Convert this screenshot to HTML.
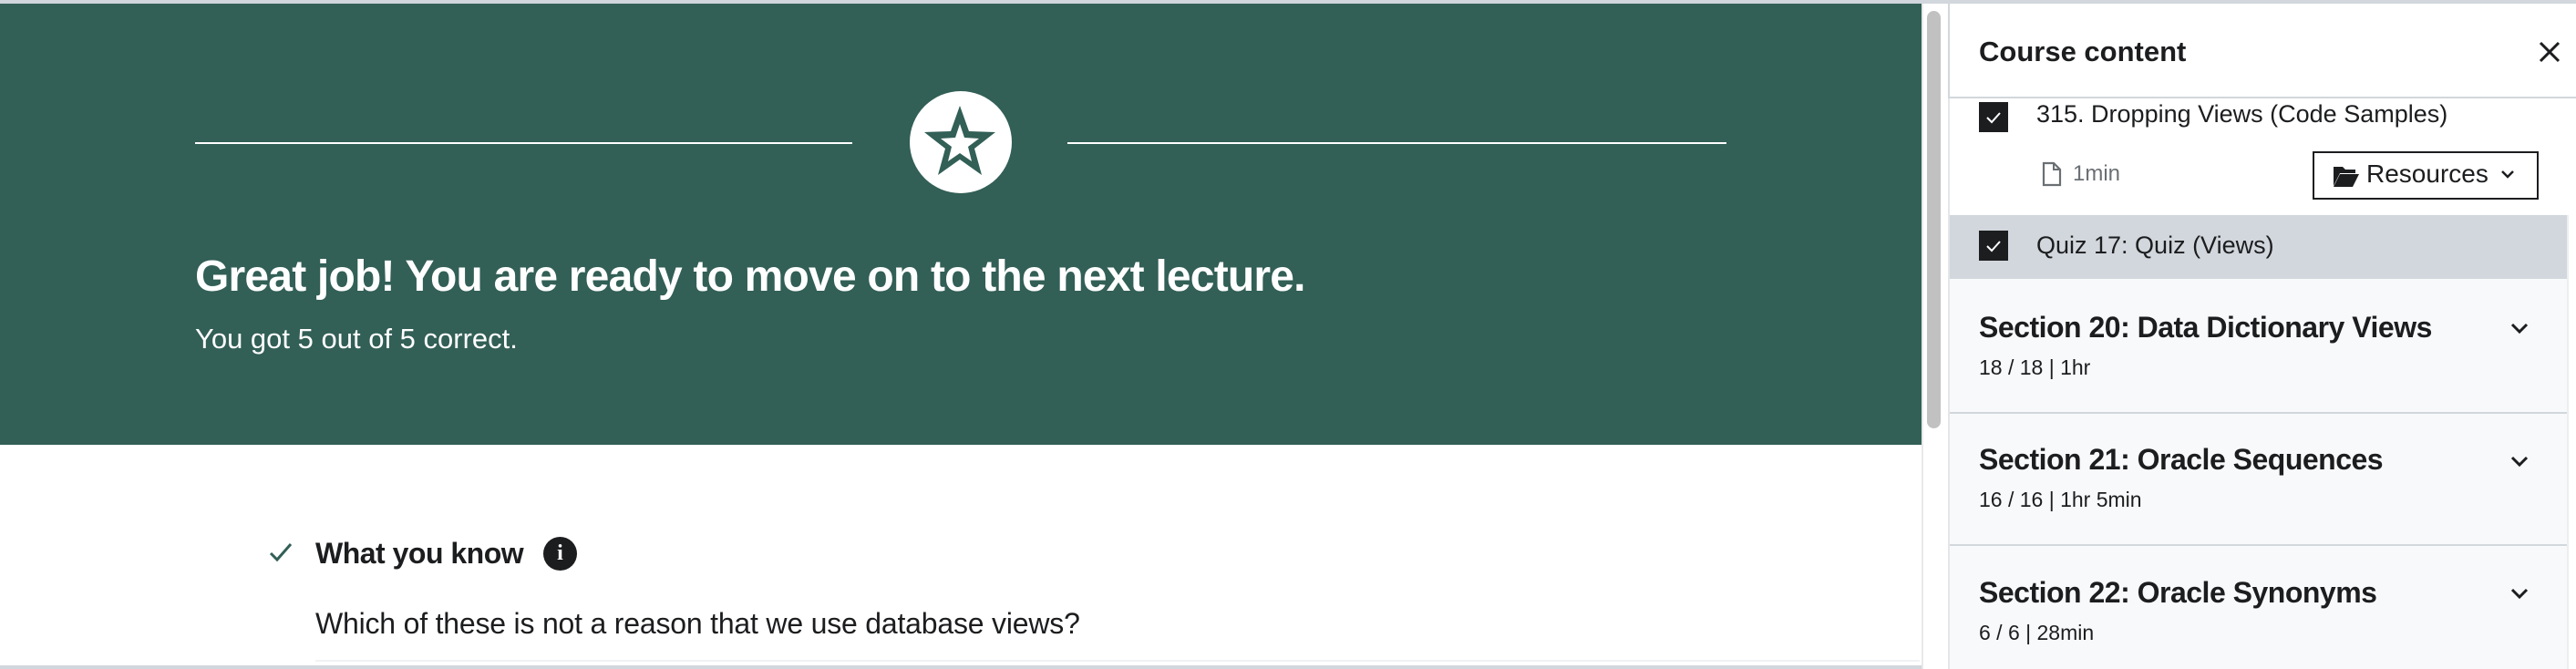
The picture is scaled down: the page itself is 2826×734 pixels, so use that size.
<!DOCTYPE html>
<html><head><meta charset="utf-8"><style>
*{margin:0;padding:0;box-sizing:border-box}
body{width:2826px;height:734px;overflow:hidden;background:#fff;font-family:"Liberation Sans",sans-serif;color:#1c1d1f;position:relative}
.a{position:absolute;white-space:nowrap}
.cb{position:absolute;width:32px;height:33px;background:#1c1d1f}
.cb svg{position:absolute;left:6px;top:7px}
</style></head><body>
<div class="a" style="left:0;top:0;width:2826px;height:4px;background:#d1d7dc"></div>
<div class="a" style="left:0;top:4px;width:2108px;height:484px;background:#325f56"></div>
<div class="a" style="left:214px;top:156px;width:721px;height:2px;background:#fff"></div>
<div class="a" style="left:1171px;top:156px;width:723px;height:2px;background:#fff"></div>
<svg class="a" style="left:998px;top:100px" width="112" height="112" viewBox="0 0 112 112">
<circle cx="56" cy="56" r="56" fill="#fff"/>
<path d="M55 16 L65 44 L94 45 L71 63 L79 92 L55 75 L31 92 L39 63 L16 45 L45 44 Z" fill="#325f56"/>
<path d="M55 36 L60 51 L76 52 L64 61 L68 77 L55 68 L42 77 L46 61 L34 52 L50 51 Z" fill="#fff"/>
</svg>
<div class="a" style="left:214px;top:276px;font-size:48px;font-weight:bold;color:#fff;letter-spacing:-0.8px">Great job! You are ready to move on to the next lecture.</div>
<div class="a" style="left:214px;top:354px;font-size:31px;color:#fff">You got 5 out of 5 correct.</div>

<svg class="a" style="left:294px;top:592px" width="28" height="28" viewBox="0 0 28 28"><path d="M3 15 L10 22 L25 5" stroke="#325f56" stroke-width="3" fill="none"/></svg>
<div class="a" style="left:346px;top:589px;font-size:32px;font-weight:bold;letter-spacing:-0.5px">What you know</div>
<div class="a" style="left:596px;top:589px;width:37px;height:37px;border-radius:50%;background:#1c1d1f;color:#fff;font-size:24px;font-weight:bold;text-align:center;line-height:37px;font-family:'Liberation Serif',serif">i</div>
<div class="a" style="left:346px;top:666px;font-size:32px;letter-spacing:-0.2px">Which of these is not a reason that we use database views?</div>
<div class="a" style="left:346px;top:724px;width:1760px;height:2px;background:#f0f2f4"></div>
<div class="a" style="left:0;top:730px;width:2826px;height:4px;background:#d1d7dc"></div>

<div class="a" style="left:2108px;top:4px;width:29px;height:730px;background:#fff;border-left:2px solid #e8e8e8"></div>
<div class="a" style="left:2114px;top:12px;width:15px;height:458px;border-radius:8px;background:#c1c1c1"></div>

<div class="a" style="left:2137px;top:4px;width:689px;height:730px;background:#fff;border-left:2px solid #e4e6e8"></div>

<div class="cb" style="left:2171px;top:112px"><svg width="20" height="20" viewBox="0 0 20 20"><path d="M3 10L8 15L17 5" stroke="#fff" stroke-width="2" fill="none"/></svg></div>
<div class="a" style="left:2234px;top:110px;font-size:27px">315. Dropping Views (Code Samples)</div>
<svg class="a" style="left:2240px;top:177px" width="22" height="28" viewBox="0 0 22 28"><path d="M2 2H13L20 9V26H2Z" stroke="#6a6f73" stroke-width="2.2" fill="none"/><path d="M13 2V9H20" stroke="#6a6f73" stroke-width="2" fill="none"/></svg>
<div class="a" style="left:2274px;top:177px;font-size:24px;color:#6a6f73">1min</div>
<div class="a" style="left:2537px;top:166px;width:248px;height:53px;border:2px solid #1c1d1f"></div>
<svg class="a" style="left:2559px;top:180px" width="30" height="26" viewBox="0 0 30 26"><path d="M1 3H11L14 6H25V10H8L1 24Z" fill="#1c1d1f"/><path d="M8 11H29L22 25H1Z" fill="#1c1d1f"/></svg>
<div class="a" style="left:2596px;top:175px;font-size:28px">Resources</div>
<svg class="a" style="left:2742px;top:184px" width="18" height="14" viewBox="0 0 18 14"><path d="M3 4L9 10L15 4" stroke="#1c1d1f" stroke-width="2.5" fill="none"/></svg>

<div class="a" style="left:2137px;top:4px;width:689px;height:104px;border-left:2px solid #d1d7dc;border-bottom:2px solid #d1d7dc;background:#fff;z-index:2"></div>
<div class="a" style="left:2171px;top:39px;font-size:31px;font-weight:bold;z-index:3">Course content</div>
<svg class="a" style="left:2783px;top:43px;z-index:3" width="28" height="28" viewBox="0 0 28 28"><path d="M4 4L24 24M24 4L4 24" stroke="#1c1d1f" stroke-width="3"/></svg>

<div class="a" style="left:2139px;top:236px;width:677px;height:70px;background:#d1d7dc"></div>
<div class="cb" style="left:2171px;top:253px"><svg width="20" height="20" viewBox="0 0 20 20"><path d="M3 10L8 15L17 5" stroke="#fff" stroke-width="2" fill="none"/></svg></div>
<div class="a" style="left:2234px;top:254px;font-size:27px">Quiz 17: Quiz (Views)</div>

<div class="a" style="left:2139px;top:306px;width:677px;height:428px;background:#f7f9fa"></div>
<div class="a" style="left:2139px;top:452px;width:677px;height:2px;background:#d1d7dc"></div>
<div class="a" style="left:2139px;top:597px;width:677px;height:2px;background:#d1d7dc"></div>
<div class="a" style="left:2816px;top:236px;width:10px;height:498px;background:#fff;border-left:2px solid #eceef0"></div>

<div class="a" style="left:2171px;top:341px;font-size:32px;font-weight:bold;letter-spacing:-0.5px">Section 20: Data Dictionary Views</div>
<div class="a" style="left:2171px;top:390px;font-size:23px">18 / 18 | 1hr</div>
<div class="a" style="left:2171px;top:486px;font-size:32px;font-weight:bold;letter-spacing:-0.5px">Section 21: Oracle Sequences</div>
<div class="a" style="left:2171px;top:535px;font-size:23px">16 / 16 | 1hr 5min</div>
<div class="a" style="left:2171px;top:632px;font-size:32px;font-weight:bold;letter-spacing:-0.5px">Section 22: Oracle Synonyms</div>
<div class="a" style="left:2171px;top:681px;font-size:23px">6 / 6 | 28min</div>
<svg class="a" style="left:2753px;top:352px" width="22" height="16" viewBox="0 0 22 16"><path d="M3 4L11 12L19 4" stroke="#1c1d1f" stroke-width="3" fill="none"/></svg>
<svg class="a" style="left:2753px;top:498px" width="22" height="16" viewBox="0 0 22 16"><path d="M3 4L11 12L19 4" stroke="#1c1d1f" stroke-width="3" fill="none"/></svg>
<svg class="a" style="left:2753px;top:643px" width="22" height="16" viewBox="0 0 22 16"><path d="M3 4L11 12L19 4" stroke="#1c1d1f" stroke-width="3" fill="none"/></svg>
</body></html>
